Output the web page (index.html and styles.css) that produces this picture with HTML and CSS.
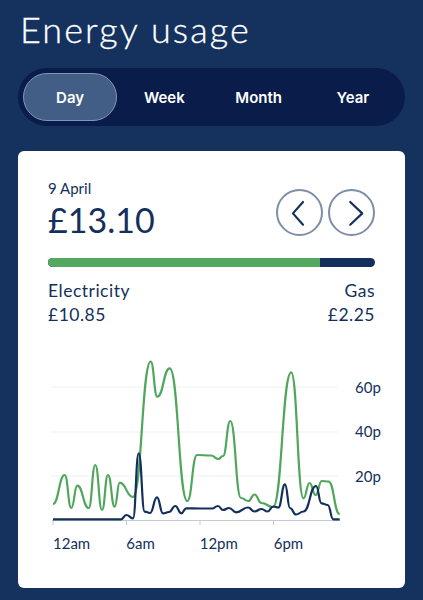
FILE: index.html
```html
<!DOCTYPE html>
<html lang="en">
<head>
<meta charset="utf-8">
<title>Energy usage</title>
<link rel="stylesheet" href="styles.css">
</head>
<body>
<main class="page">
  <h1 class="title">Energy usage</h1>
  <nav class="tabs">
    <button class="tab active">Day</button>
    <button class="tab">Week</button>
    <button class="tab">Month</button>
    <button class="tab">Year</button>
  </nav>
  <section class="card">
    <div class="summary">
      <div class="head">
        <div class="amount-block">
          <div class="date">9 April</div>
          <div class="amount">£13.10</div>
        </div>
        <div class="nav">
          <button class="circle" aria-label="Previous">
            <svg width="44" height="44" viewBox="0 0 44 44"><polyline points="25.6,10.7 15.3,22.4 25.6,34" fill="none" stroke="#13305c" stroke-width="2.2" stroke-linecap="round" stroke-linejoin="round"/></svg>
          </button>
          <button class="circle" aria-label="Next">
            <svg width="44" height="44" viewBox="0 0 44 44"><polyline points="20.7,10.7 33,22.4 20.7,34" fill="none" stroke="#13305c" stroke-width="2.2" stroke-linecap="round" stroke-linejoin="round"/></svg>
          </button>
        </div>
      </div>
      <div class="bar"><div class="bar-elec" style="width:83.2%"></div></div>
      <div class="split">
        <div class="fuel">
          <div>Electricity</div>
          <div>£10.85</div>
        </div>
        <div class="fuel right">
          <div>Gas</div>
          <div>£2.25</div>
        </div>
      </div>
    </div>
    <svg class="chart" width="387" height="261" viewBox="18 327 387 261">
      <g stroke="#eef0f3" stroke-width="1">
        <line x1="51" y1="387" x2="338" y2="387"/>
        <line x1="51" y1="432" x2="338" y2="432"/>
        <line x1="51" y1="476" x2="338" y2="476"/>
      </g>
      <g stroke="#c3cad5" stroke-width="1">
        <line x1="52" y1="520.5" x2="340" y2="520.5"/>
        <line x1="53" y1="520" x2="53" y2="525"/>
        <line x1="126.5" y1="520" x2="126.5" y2="525"/>
        <line x1="200" y1="520" x2="200" y2="525"/>
        <line x1="273.5" y1="520" x2="273.5" y2="525"/>
      </g>
      <g class="ylabels">
        <text x="355" y="392.7">60p</text>
        <text x="355" y="437.3">40p</text>
        <text x="355" y="481.5">20p</text>
      </g>
      <g class="xlabels">
        <text x="53" y="548.5">12am</text>
        <text x="126.3" y="548.5">6am</text>
        <text x="199.7" y="548.5">12pm</text>
        <text x="273.7" y="548.5">6pm</text>
      </g>
      <path fill="none" stroke="#4fa65c" stroke-width="2.2" stroke-linejoin="round" d="M53,504 C58.85,504 58.85,475 64.7,475 C68,475 68,508 71.3,508 C74.3,508 74.3,485.7 77.3,485.7 C83,485.7 83,508 88.7,508 C92,508 92,465 95.3,465 C98.65,465 98.65,510 102,510 C105,510 105,475 108,475 C111.35,475 111.35,506.7 114.7,506.7 C117.2,506.7 117.2,482.7 119.7,482.7 C126.35,482.7 126.35,497 133,497 C141.850,497 141.85,361.7 150.7,361.7 C154,361.7 154,396.7 157.3,396.7 C163.5,396.7 163.5,368.3 169.7,368.3 C178.5,368.3 178.5,501 187.3,501 C192.15,501 192.15,455 197,455 C204,455 204,455.5 211,455.5 C214.65,455.5 214.65,459 218.3,459 C220.65,459 220.65,456 223,456 C226.65,456 226.65,421 230.3,421 C235.65,421 235.65,498 241,498 C244.65,498 244.65,501 248.3,501 C251.4,501 251.4,494.5 254.5,494.5 C258,494.5 258,503 261.5,503 C267.25,503 267.25,507 273,507 C282.1,507 282.1,372.3 291.2,372.3 C297.35,372.3 297.35,498.3 303.5,498.3 C306.5,498.3 306.5,483 309.5,483 C312.6,483 312.6,495 315.7,495 C318.7,495 318.7,481 321.7,481 C325.1,481 325.1,481.5 328.5,481.5 C334.1,481.5 334.1,514 339.7,514"/>
      <path fill="none" stroke="#13305c" stroke-width="2.2" stroke-linejoin="round" d="M53,519.3 L121,519.3 C123.65,519.3 123.65,515 126.3,515 C129.65,515 129.65,518.3 133,518.3 C135.85,518.3 135.85,453.3 138.7,453.3 C141.7,453.3 141.7,511.7 144.7,511.7 C147.35,511.7 147.35,513 150,513 C153.5,513 153.5,497.3 157,497.3 C160,497.3 160,513.3 163,513.3 C166,513.3 166,512 169,512 C172.15,512 172.15,506 175.3,506 C178.3,506 178.3,513.3 181.3,513.3 C183.8,513.3 183.8,508.3 186.3,508.3 C193.15,508.3 193.15,508.5 200,508.5 L212,508.5 C215,508.5 215,506 218,506 C220.5,506 220.5,510 223,510 C226,510 226,508 229,508 C232.65,508 232.65,512.3 236.3,512.3 C242.15,512.3 242.15,507.5 248,507.5 C251.25,507.5 251.25,511.5 254.5,511.5 C258,511.5 258,509 261.5,509 C264.5,509 264.5,511.5 267.5,511.5 C270.4,511.5 270.4,506.5 273.3,506.5 C275.8,506.5 275.8,507.5 278.3,507.5 C281.65,507.5 281.65,484.3 285,484.3 C287.5,484.3 287.5,508 290,508 C293,508 293,514.5 296,514.5 C299.75,514.5 299.75,511.5 303.5,511.5 C309.75,511.5 309.75,486 316,486 C318.75,486 318.75,503.3 321.5,503.3 C324.6,503.3 324.6,505 327.7,505 C330.5,505 330.5,519.3 333.3,519.3 L339.7,519.3"/>
    </svg>
  </section>
</main>
</body>
</html>
```

FILE: styles.css
```css
* { box-sizing: border-box; }
html, body {
  margin: 0;
  padding: 0;
  background: #15325f;
}
body {
  font-family: Lato, "Open Sans", sans-serif;
  color: #13305c;
}
.page {
  display: flex;
  flex-direction: column;
  padding: 0 18px;
}
.title {
  margin: 8px 0 0 2px;
  font-family: Lato, sans-serif;
  font-weight: 300;
  font-size: 36px;
  line-height: 43px;
  color: #ffffff;
  letter-spacing: 2.1px;
  -webkit-text-stroke: 0.3px #ffffff;
}
.tabs {
  margin-top: 17px;
  height: 58px;
  padding: 5px;
  border-radius: 29px;
  background: #0a1d4a;
  display: grid;
  grid-template-columns: repeat(4, 1fr);
}
.tab {
  border: none;
  background: transparent;
  color: #ffffff;
  font-family: Inter, "Liberation Sans", sans-serif;
  font-weight: 600;
  font-size: 15px;
  border-radius: 24px;
  padding: 0;
  cursor: pointer;
}
.tab.active {
  background: #425e87;
  border: 1.5px solid #8197b6;
}
.card {
  margin-top: 25px;
  background: #ffffff;
  border-radius: 6px;
  height: 437px;
  overflow: hidden;
  display: flex;
  flex-direction: column;
}
.summary {
  padding: 28px 30px 0 30px;
}
.head {
  display: flex;
  justify-content: space-between;
  align-items: flex-start;
}
.date {
  font-size: 15px;
  line-height: 18px;
}
.amount {
  margin-top: 2px;
  font-size: 34px;
  line-height: 41px;
}
.nav {
  display: flex;
  gap: 5px;
  margin-top: 10px;
}
.circle {
  width: 47px;
  height: 47px;
  border-radius: 50%;
  border: 2px solid #7d8ea8;
  background: #ffffff;
  padding: 0;
  display: flex;
  align-items: center;
  justify-content: center;
}
.circle svg { display: block; }
.bar {
  margin-top: 18px;
  height: 9px;
  border-radius: 5px;
  background: #13305c;
  overflow: hidden;
}
.bar-elec {
  height: 100%;
  background: #52a95f;
}
.split {
  margin-top: 12px;
  display: flex;
  justify-content: space-between;
}
.fuel {
  font-size: 17.5px;
  line-height: 24px;
  letter-spacing: 0.5px;
}
.fuel.right { text-align: right; }
.chart {
  display: block;
  flex: none;
}
.chart text {
  font-family: Lato, sans-serif;
  font-size: 15px;
  fill: #13305c;
}
```
